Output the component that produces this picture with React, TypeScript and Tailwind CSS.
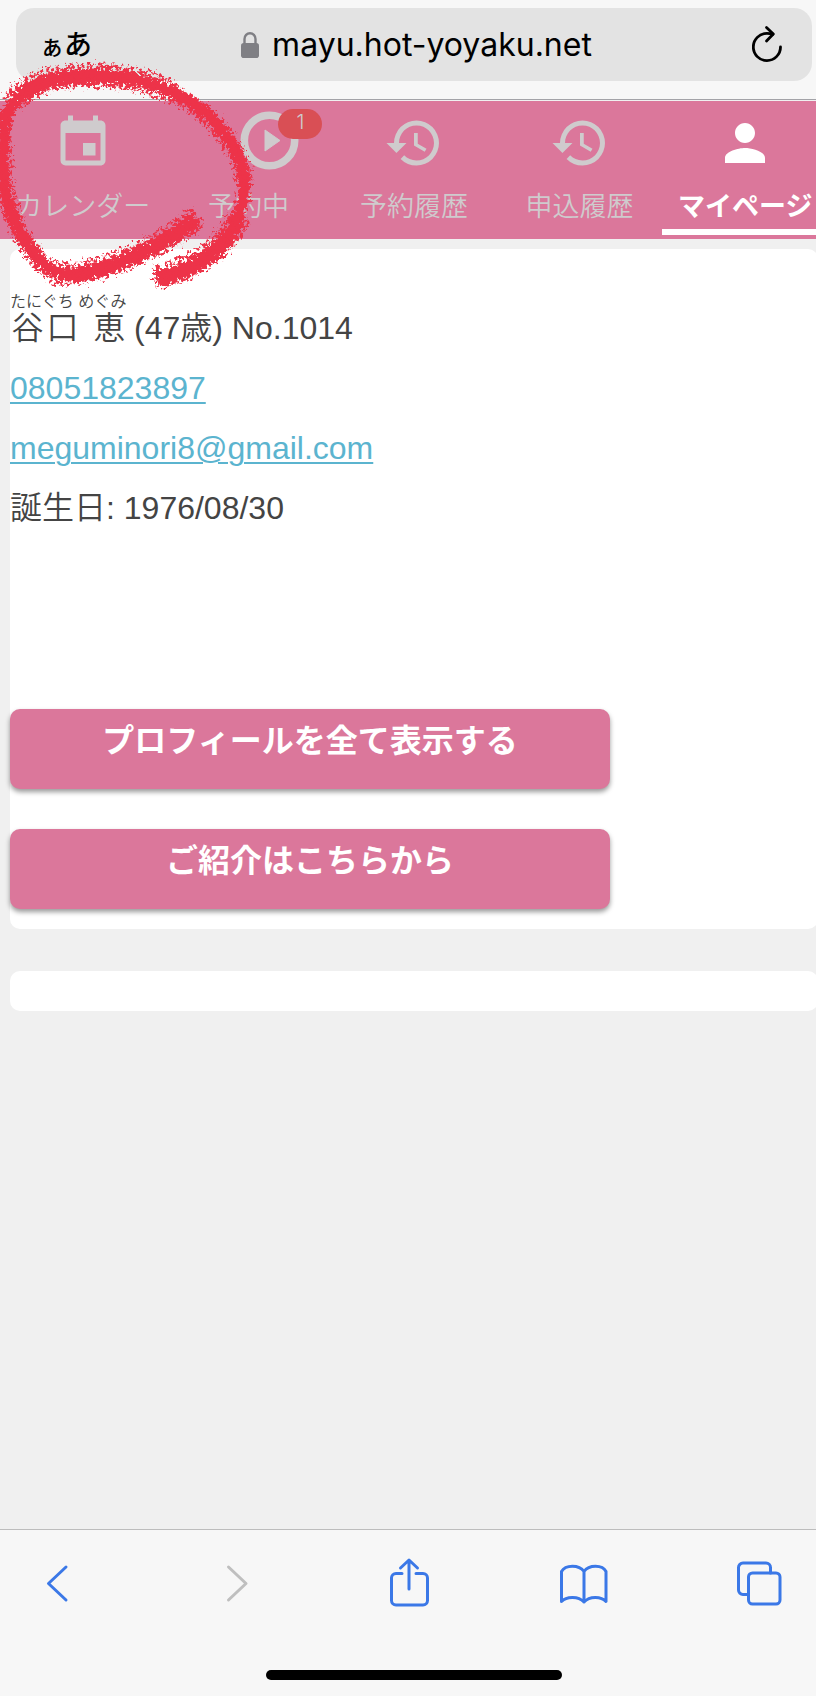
import type { ReactNode } from 'react'
import { MdEvent, MdHistory, MdPerson } from 'react-icons/md'

type Tab = {
  name: string
  href: string
  icon: ReactNode
  badge?: number
  active?: boolean
}

const tabs: Tab[] = [
  { name: 'カレンダー', href: '#calendar', icon: <MdEvent className="size-15" /> },
  { name: '予約中', href: '#reserved', icon: <PlayIcon />, badge: 1 },
  { name: '予約履歴', href: '#history', icon: <MdHistory className="size-15" /> },
  { name: '申込履歴', href: '#applications', icon: <MdHistory className="size-15" /> },
  { name: 'マイページ', href: '#mypage', icon: <MdPerson className="size-15" />, active: true }
]

function PlayIcon() {
  return (
    <svg className="size-15 overflow-visible" viewBox="0 0 60 60" fill="none">
      <circle cx="29.5" cy="27.5" r="25.2" stroke="currentColor" strokeWidth="7.6" />
      <path d="M25 17v21L40 27.5z" fill="currentColor" stroke="currentColor" strokeWidth="1" strokeLinejoin="round" />
    </svg>
  )
}

function AddressBar() {
  return (
    <header className="border-b border-[#a3a3a8] bg-[#f7f7f7] px-4 pt-2 pb-[18px]">
      <div className="flex h-[73px] items-center justify-between rounded-[18px] bg-[#e3e3e3] pr-7 pl-6 font-['Inter','Noto_Sans_CJK_JP',sans-serif] text-black">
        <button type="button" aria-label="表示設定" className="flex w-18 items-baseline font-medium">
          <span className="text-[24px]">ぁ</span>
          <span className="text-[28px]">あ</span>
        </button>
        <div className="flex items-center gap-3">
          <svg className="h-7 w-5" viewBox="0 0 20 28" fill="none">
            <path d="M4.5 13V8a5.5 5.8 0 0 1 11 0v5" stroke="#7f7f84" strokeWidth="2.4" />
            <rect x="1" y="12" width="18" height="15" rx="2.8" fill="#7f7f84" />
          </svg>
          <span className="text-[32px]">mayu.hot-yoyaku.net</span>
        </div>
        <button type="button" aria-label="再読み込み" className="flex w-16 justify-end">
          <svg className="h-10 w-8" viewBox="0 0 32 40" fill="none" stroke="black" strokeWidth="2.8" strokeLinecap="round" strokeLinejoin="round">
            <path d="M28.5 22A13.6 13.6 0 1 1 14.9 8.4q3 0 6 .8" />
            <path d="M14.5 2.5l6.8 6.5-6.8 7" />
          </svg>
        </button>
      </div>
    </header>
  )
}

function Navbar() {
  return (
    <nav className="mt-px grid grid-cols-5 bg-[#db779b]">
      {tabs.map((tab) => (
        <a
          key={tab.name}
          href={tab.href}
          className={`flex h-[138px] flex-col items-center pt-3 text-[27px] ${tab.active ? 'font-bold text-white' : 'font-[350] text-[#cfcbcd]'}`}
        >
          <span className={`relative ${tab.badge ? 'pl-11' : ''}`}>
            {tab.icon}
            {tab.badge && (
              <span className="absolute -top-1 -right-[22px] flex h-[30px] w-11 items-center justify-center rounded-full bg-[#d94f55] pb-1 font-['Inter',sans-serif] text-xl leading-6">
                {tab.badge}
              </span>
            )}
          </span>
          <span className="mt-3 leading-11">{tab.name}</span>
          {tab.active && <span className="h-1.5 w-full bg-white" />}
        </a>
      ))}
    </nav>
  )
}

function Profile() {
  return (
    <section className="rounded-[10px] bg-white pt-11 pb-5 text-[32px] leading-[60px] text-[#444]">
      <p className="h-[65px] font-[350]">
        <ruby>
          谷口 恵<rt className="text-base leading-6">たにぐち めぐみ</rt>
        </ruby>{' '}
        (47歳) No.1014
      </p>
      <p>
        <a href="tel:08051823897" className="text-[#5bb4cf] underline decoration-2 underline-offset-3">08051823897</a>
      </p>
      <p>
        <a href="mailto:meguminori8@gmail.com" className="text-[#5bb4cf] underline decoration-2 underline-offset-3">meguminori8@gmail.com</a>
      </p>
      <p className="h-[60px] font-[350]">誕生日: 1976/08/30</p>

      <div className="mt-[171px] flex flex-col gap-10">
        <PinkButton>プロフィールを全て表示する</PinkButton>
        <PinkButton>ご紹介はこちらから</PinkButton>
      </div>
    </section>
  )
}

function PinkButton({ children }: { children: ReactNode }) {
  return (
    <button
      type="button"
      className="h-20 w-[600px] rounded-[10px] bg-[#db779b] pb-4 leading-16 font-bold text-white shadow-[0_3px_5px_rgba(0,0,0,0.4)]"
    >
      {children}
    </button>
  )
}

function Toolbar() {
  return (
    <footer className="border-t border-[#bdbdbd] bg-[#f7f7f7] pt-7 pb-4">
      <div className="flex justify-between pr-[45px] pl-[33px] text-[#3b78e7] [&_svg]:size-12 [&_svg]:overflow-visible [&_svg]:fill-none [&_svg]:stroke-current [&_svg]:stroke-3">
        <button type="button" aria-label="戻る">
          <svg viewBox="0 0 48 48" strokeLinecap="round" strokeLinejoin="round">
            <path d="M33 9L15.5 25.5 33 42" />
          </svg>
        </button>
        <button type="button" aria-label="進む" disabled className="text-[#bfbfbf]">
          <svg viewBox="0 0 48 48" strokeLinecap="round" strokeLinejoin="round">
            <path d="M19.5 9L37 25.5 19.5 42" />
          </svg>
        </button>
        <button type="button" aria-label="共有">
          <svg viewBox="0 0 48 48" strokeLinecap="round" strokeLinejoin="round">
            <path d="M18 15.5h-6a4.5 4.5 0 0 0-4.5 4.5v22.5a4.5 4.5 0 0 0 4.5 4.5h27a4.5 4.5 0 0 0 4.5-4.5V20a4.5 4.5 0 0 0-4.5-4.5h-7" />
            <path d="M25 31V2.5M16.5 10L25 2l8.5 8" />
          </svg>
        </button>
        <button type="button" aria-label="ブックマーク">
          <svg viewBox="0 0 48 48" strokeLinecap="round" strokeLinejoin="round">
            <path d="M24 13.5C19 6.5 5.500 6.500 1.500 13.500v30c5-5.500 17-5.500 22.500.5 5.500-6 17-6 22-.5V13.500C42.500 6.500 29 6.500 24 13.500zV44" />
          </svg>
        </button>
        <button type="button" aria-label="タブ">
          <svg viewBox="0 0 48 48" strokeLinecap="round" strokeLinejoin="round">
            <rect x="13.5" y="15" width="31.5" height="31" rx="4" />
            <path d="M13.5 36.5H8a4.5 4.5 0 0 1-4.5-4.5V9.5A4.5 4.5 0 0 1 8 5h23a4.5 4.5 0 0 1 4.5 4.5V15" />
          </svg>
        </button>
      </div>
      <div className="mx-auto mt-16 h-2.5 w-[296px] rounded-full bg-black" />
    </footer>
  )
}

// Crayon-like ring drawn around the calendar tab
function Marker() {
  return (
    <svg className="pointer-events-none absolute top-0 left-0 h-[300px] w-[280px]" viewBox="0 0 280 300" fill="none" stroke="#ed3349" strokeLinejoin="round">
      <filter id="rough" x="-20" y="40" width="300" height="260" filterUnits="userSpaceOnUse" colorInterpolationFilters="sRGB">
        <feTurbulence type="fractalNoise" baseFrequency="0.3" numOctaves="2" seed="4" result="noise" />
        <feDisplacementMap in="SourceGraphic" in2="noise" scale="14" xChannelSelector="R" yChannelSelector="G" />
      </filter>
      <filter id="grain" x="-20" y="40" width="300" height="260" filterUnits="userSpaceOnUse" colorInterpolationFilters="sRGB">
        <feTurbulence type="fractalNoise" baseFrequency="0.32" numOctaves="2" seed="9" result="noise" />
        <feColorMatrix in="noise" type="matrix" values="0 0 0 0 0  0 0 0 0 0  0 0 0 0 0  9 0 0 0 -4" result="dots" />
        <feDisplacementMap in="SourceGraphic" in2="noise" scale="14" xChannelSelector="G" yChannelSelector="B" result="edge" />
        <feComposite in="edge" in2="dots" operator="in" />
      </filter>
      <g filter="url(#rough)">
        <path strokeWidth="12" d="M157 279C176 276 200 264 214 252C234 232 245 207 244 180C241 151 222 127 203 111C182 95 160 85 133 79C110 75 88 76 67 78C46 80 28 88 16 99C4 113 3 131 3 151C1 176 5 201 16 224C27 246 40 264 56 272C72 278 95 271 115 264C145 253 173 238 196 219" />
        <path strokeWidth="15" d="M20 97C32 86 48 79 67 78C88 76 110 75 133 79" />
        <path strokeWidth="15" d="M60 274C76 277 95 271 115 264C145 253 173 238 196 219" />
        <path strokeWidth="15" d="M157 279C176 276 200 264 214 252C224 243 232 234 237 222" />
      </g>
      <g filter="url(#grain)">
        <path strokeWidth="24" d="M12 102C26 86 46 79 67 77C88 74 110 75 133 79C146 82 156 85 172 93" />
        <path strokeWidth="23" d="M50 272C72 277 95 270 115 263C145 252 173 237 199 217" />
        <path strokeWidth="24" d="M154 277C176 274 200 262 214 250C224 241 232 232 239 216" />
        <path strokeWidth="17" d="M172 93C205 110 245 148 244 184M4 120C1 180 6 232 50 272" />
      </g>
    </svg>
  )
}

export default function App() {
  return (
    <div lang="ja" className="relative overflow-hidden bg-[#f0f0f0] font-['Liberation_Sans','Noto_Sans_CJK_JP',sans-serif]">
      <div className="flex min-h-screen min-w-[828px] flex-col">
        <AddressBar />
        <Navbar />
        <main className="flex-1 px-2.5 pt-2.5">
          <Profile />
          <section className="mt-[42px] h-10 rounded-[10px] bg-white" />
        </main>
        <Toolbar />
      </div>
      <Marker />
    </div>
  )
}
